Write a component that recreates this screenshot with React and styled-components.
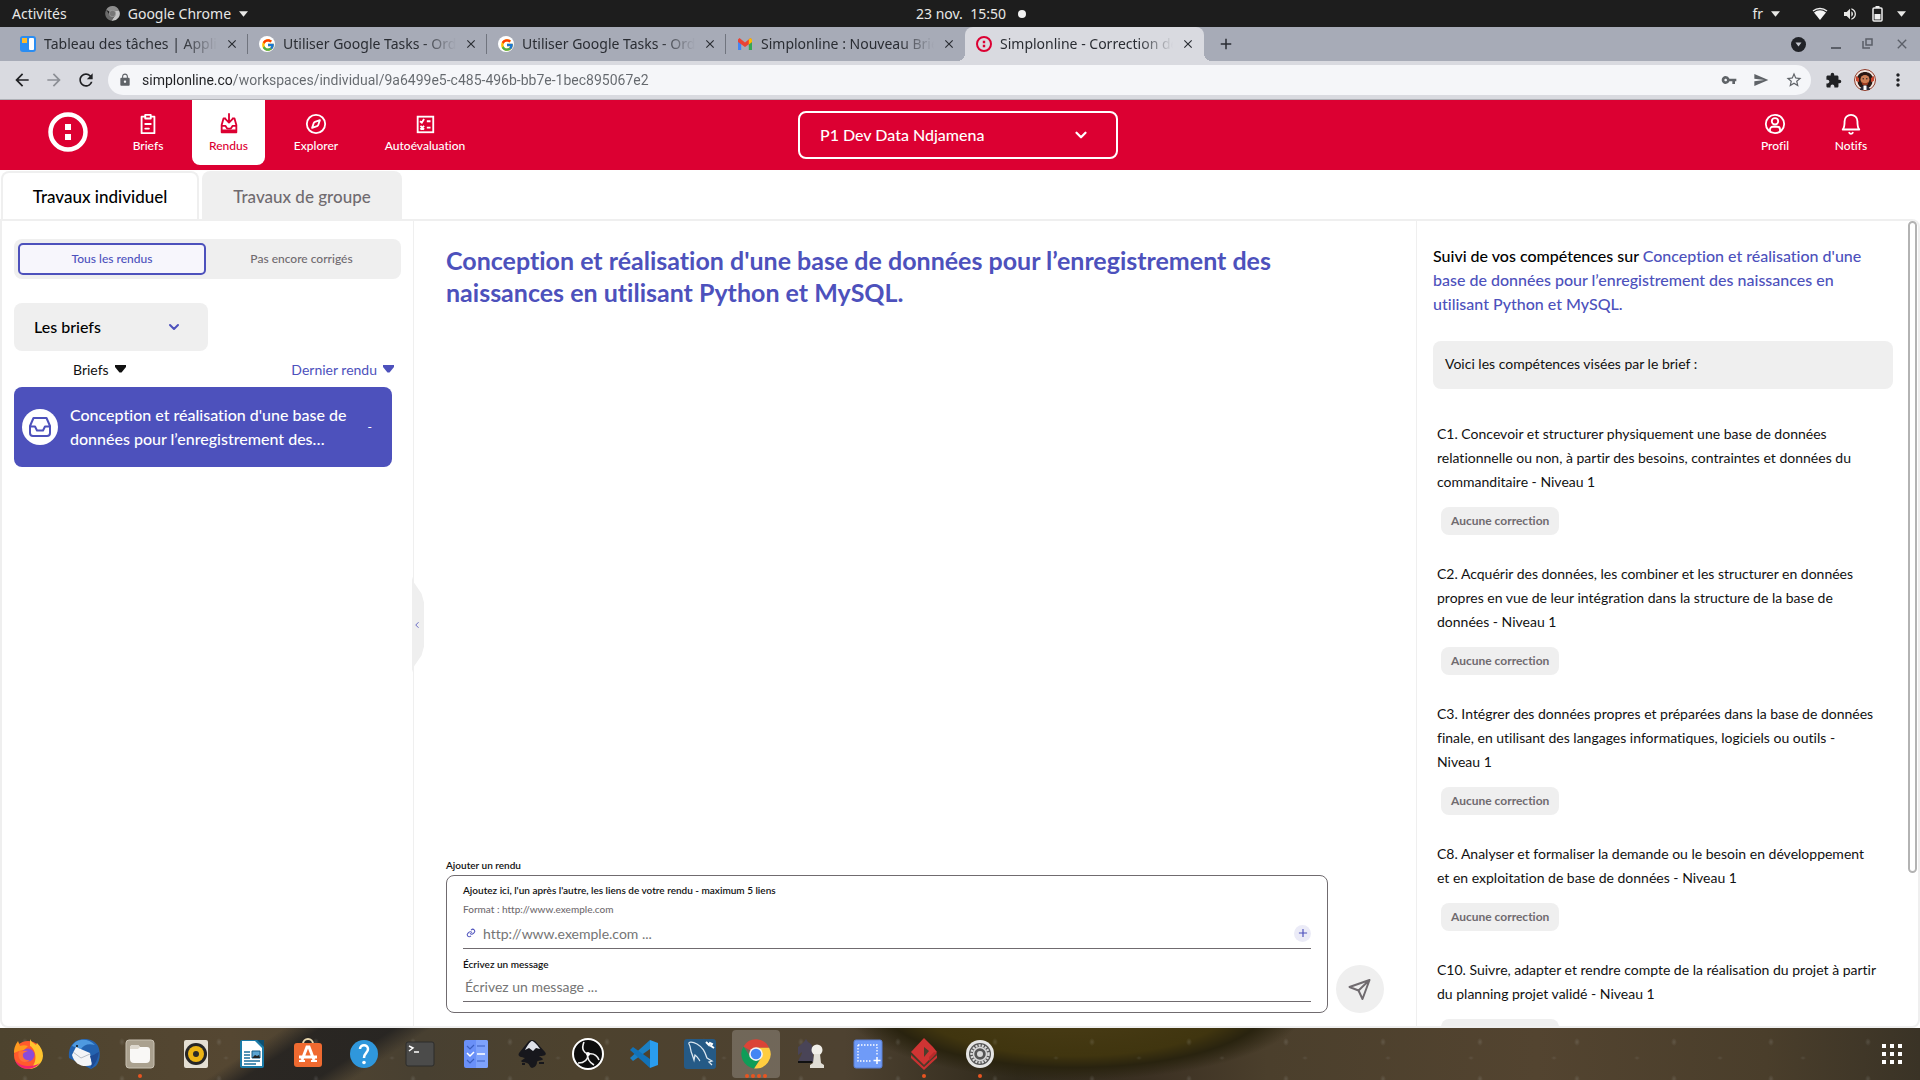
import React from 'react';
import styled, { createGlobalStyle, css } from 'styled-components';
import {
  MdArrowBack, MdArrowForward, MdRefresh, MdLock, MdVpnKey, MdSend, MdStarBorder,
  MdExtension, MdMoreVert, MdVolumeUp, MdAdd, MdClose,
} from 'react-icons/md';
import { FcGoogle } from 'react-icons/fc';
import { Compass, ChevronDown, ChevronLeft } from 'lucide-react';
import { BiLink } from 'react-icons/bi';

const red = '#dc0032';
const violet = '#4d51bc';
const mist = '#efefef';
const smoke = '#706b6f';

const GlobalStyle = createGlobalStyle`
  *, *::before, *::after { box-sizing: border-box; }
  html, body, #root { height: 100%; }
  body { margin: 0; overflow: hidden; background: #fff; font-variant-ligatures: none; }
  body, button, input, select { font-family: Lato, "Open Sans", sans-serif; }
  button, input, select { margin: 0; padding: 0; border: 0; background: none; font-size: inherit; color: inherit; font-variant-ligatures: none; }
  button { display: flex; align-items: center; justify-content: center; cursor: pointer; }
  svg { display: block; flex: none; }
  h1, h2, p, ul { margin: 0; padding: 0; list-style: none; }
`;

const Desktop = styled.div`
  display: flex;
  flex-direction: column;
  height: 100vh;
`;

/* ---------- system bar ---------- */
const SystemBar = styled.div`
  display: grid;
  grid-template-columns: 1fr auto 1fr;
  align-items: center;
  height: 27px;
  padding: 0 14px 0 12px;
  background: #1d1d1d;
  color: #e8e8e6;
  font-family: "Noto Sans", sans-serif;
  font-size: 14px;
  button { font-family: inherit; }
`;
const SystemGroup = styled.div`
  display: flex;
  align-items: center;
  gap: ${(p) => p.$gap}px;
  padding-left: ${(p) => p.$inset || 0}px;
  justify-content: ${(p) => (p.$end ? 'flex-end' : 'flex-start')};
`;
const SystemButton = styled.button`
  gap: 8px;
  margin-right: ${(p) => p.$after || 0}px;
`;
const Dot = styled.span`
  width: 8px;
  height: 8px;
  border-radius: 50%;
  background: #f2f2f2;
`;

/* ---------- browser chrome ---------- */
const TabStrip = styled.div`
  display: flex;
  align-items: center;
  height: 34px;
  padding-left: 9px;
  background: #a7abb7;
  font-family: "Noto Sans", sans-serif;
  font-size: 14px;
  line-height: 18px;
  color: #2a2d33;
`;
const BrowserTab = styled.div`
  position: relative;
  display: flex;
  align-items: center;
  gap: 8px;
  width: 239px;
  height: 34px;
  padding: 0 9px 0 11px;
  border-radius: 8px 8px 0 0;
  background: ${(p) => (p.$active ? '#d9dae0' : 'transparent')};
  ${(p) => p.$divider && css`
    &::after {
      content: '';
      position: absolute;
      right: 0;
      top: 7px;
      height: 20px;
      border-right: 1px solid #70747e;
    }
  `}
  ${(p) => p.$active && css`
    &::before, &::after {
      content: '';
      position: absolute;
      bottom: 0;
      width: 8px;
      height: 8px;
    }
    &::before { left: -8px; background: radial-gradient(circle at 0 0, transparent 8px, #d9dae0 8px); }
    &::after { right: -8px; background: radial-gradient(circle at 100% 0, transparent 8px, #d9dae0 8px); }
  `}
`;
const TabTitle = styled.span`
  flex: 1;
  min-width: 0;
  overflow: hidden;
  white-space: nowrap;
  mask-image: linear-gradient(to right, #000 80%, transparent);
`;
const NewTab = styled.button`
  width: 28px;
  margin-left: 8px;
`;
const WindowControls = styled.div`
  display: flex;
  align-items: center;
  gap: 20px;
  margin-left: auto;
  padding-right: 10px;
  color: #5b5f68;
`;
const TabSearch = styled.button`
  margin-right: 4px;
`;
const Toolbar = styled.div`
  display: flex;
  align-items: center;
  gap: 12px;
  height: 39px;
  padding: 0 12px;
  background: #d9dae0;
  border-bottom: 1px solid #aeb0b6;
  color: #202124;
`;
const AddressBar = styled.label`
  display: flex;
  flex: 1;
  align-items: center;
  gap: 10px;
  height: 30px;
  margin-right: 2px;
  padding: 0 8px 0 10px;
  border-radius: 15px;
  background: #f5f6f9;
  color: #5f6368;
`;
const Address = styled.input`
  flex: 1;
  min-width: 0;
  font-family: Roboto, sans-serif;
  font-size: 14px;
  color: transparent;
  background: linear-gradient(to right, #202124 91px, #64686d 91px);
  background-clip: text;
  outline: 0;
`;
const AddressActions = styled.span`
  display: flex;
  align-items: center;
  gap: 16px;
`;

/* ---------- application header ---------- */
const Header = styled.header`
  display: grid;
  grid-template-columns: 1fr 320px 1fr;
  height: 70px;
  padding: 0 44px 0 40px;
  background: ${red};
  color: #fff;
`;
const Nav = styled.nav`
  display: flex;
  justify-content: ${(p) => (p.$end ? 'flex-end' : 'flex-start')};
`;
const Logo = styled.a`
  display: flex;
  align-items: center;
  height: 64px;
  margin: 0 28px 0 8px;
`;
const NavLink = styled.a`
  display: flex;
  flex-direction: column;
  align-items: center;
  gap: 3px;
  height: 65px;
  min-width: ${(p) => p.$width}px;
  margin-left: ${(p) => p.$space || 0}px;
  padding: 13px 8px 0;
  border-radius: 0 0 8px 8px;
  font-size: 12px;
  line-height: 16px;
  font-weight: 500;
  text-decoration: none;
  color: ${(p) => (p.$active ? red : '#fff')};
  background: ${(p) => (p.$active ? '#fff' : 'transparent')};
`;
const SelectBox = styled.label`
  display: grid;
  align-items: center;
  align-self: start;
  width: ${(p) => p.$width};
  height: 48px;
  margin-top: ${(p) => p.$top}px;
  border-radius: 8px;
  border: ${(p) => (p.$outlined ? '2px solid #fff' : '0')};
  background: ${(p) => (p.$outlined ? 'transparent' : mist)};
  font-size: 16px;
  > * { grid-area: 1 / 1; }
  > svg { justify-self: end; margin-right: 26px; pointer-events: none; color: ${(p) => (p.$outlined ? '#fff' : violet)}; }
`;
const Select = styled.select`
  appearance: none;
  width: 100%;
  height: 100%;
  padding: 0 20px 2px;
  font-weight: 500;
  outline: 0;
`;

/* ---------- workspace ---------- */
const WorkTabs = styled.div`
  display: flex;
  gap: 3px;
  height: 49px;
  padding: 1px 1px 0;
`;
const WorkTab = styled.button`
  width: ${(p) => (p.$active ? 198 : 200)}px;
  border: 2px solid ${mist};
  border-bottom: 0;
  border-radius: 8px 8px 0 0;
  background: ${(p) => (p.$active ? '#fff' : mist)};
  color: ${(p) => (p.$active ? '#000' : smoke)};
  font-size: 17px;
  font-weight: 500;
`;
const Workspace = styled.main`
  display: flex;
  flex: 1;
  min-height: 0;
  border: 2px solid ${mist};
  border-radius: 0 8px 8px 8px;
`;
const Sidebar = styled.aside`
  position: relative;
  flex: none;
  width: 412px;
  padding: 18px 12px 0;
  border-right: 1px solid ${mist};
`;
const Segmented = styled.div`
  display: grid;
  grid-template-columns: 188px 1fr;
  height: 40px;
  padding: 4px;
  border-radius: 8px;
  background: ${mist};
`;
const Segment = styled.button`
  padding-bottom: 1px;
  border: 2px solid ${(p) => (p.$active ? violet : 'transparent')};
  border-radius: 5px;
  background: ${(p) => (p.$active ? '#f7f6fc' : 'transparent')};
  color: ${(p) => (p.$active ? violet : smoke)};
  font-size: 12px;
  font-weight: 500;
`;
const SortRow = styled.div`
  display: flex;
  justify-content: space-between;
  height: 36px;
  padding: 0 7px 0 59px;
  font-size: 14px;
`;
const SortButton = styled.button`
  gap: 6px;
  color: ${(p) => (p.$accent ? violet : '#111')};
`;
const BriefCard = styled.a`
  display: flex;
  align-items: center;
  gap: 12px;
  height: 80px;
  margin-right: 9px;
  padding: 0 20px 0 8px;
  border-radius: 8px;
  background: ${violet};
  color: #fff;
  font-size: 16px;
  line-height: 24px;
  font-weight: 500;
  text-decoration: none;
`;
const BriefIcon = styled.span`
  display: grid;
  place-items: center;
  flex: none;
  width: 36px;
  height: 36px;
  border-radius: 50%;
  background: #fff;
  color: ${violet};
`;
const BriefTitle = styled.span`
  flex: 1;
  display: -webkit-box;
  -webkit-box-orient: vertical;
  -webkit-line-clamp: 2;
  overflow: hidden;
`;
const BriefMark = styled.span`
  font-size: 12px;
`;
const CollapseHandle = styled.button`
  position: absolute;
  right: -11px;
  top: calc(50% - 47px);
  width: 12px;
  height: 96px;
  padding-right: 2px;
  background: ${mist};
  clip-path: polygon(0 0, 15% 6%, 80% 18%, 100% 27%, 100% 73%, 80% 82%, 15% 94%, 0 100%);
  color: ${violet};
`;
const Content = styled.section`
  display: flex;
  flex: 1;
  flex-direction: column;
  justify-content: space-between;
  min-width: 0;
  padding: 23px 32px 13px 32px;
`;
const Title = styled.h1`
  max-width: 880px;
  color: ${violet};
  font-size: 25px;
  line-height: 32px;
  font-weight: 700;
`;
const SubmitRow = styled.form`
  display: flex;
  align-items: flex-end;
  gap: 8px;
`;
const SubmitColumn = styled.div`
  flex: 1;
  font-size: 10px;
  line-height: 16px;
  font-weight: 600;
  color: #111;
`;
const SubmitBox = styled.div`
  display: flex;
  flex-direction: column;
  margin-top: 2px;
  padding: 6px 16px 10px;
  border: 1px solid ${smoke};
  border-radius: 8px;
`;
const Hint = styled.p`
  margin: 3px 0 1px;
  font-weight: 500;
  color: ${smoke};
`;
const Field = styled.div`
  display: flex;
  align-items: center;
  gap: 6px;
  height: ${(p) => p.$height}px;
  padding-left: 2px;
  margin-bottom: ${(p) => p.$space || 0}px;
  border-bottom: 1px solid ${smoke};
  color: ${violet};
`;
const TextInput = styled.input`
  flex: 1;
  font-size: 14px;
  color: #111;
  outline: 0;
  &::placeholder { color: #757575; opacity: 1; }
`;
const AddButton = styled.button`
  width: 17px;
  height: 17px;
  border-radius: 50%;
  background: #ebebf7;
  color: ${violet};
`;
const SendButton = styled.button`
  width: 48px;
  height: 48px;
  border-radius: 50%;
  background: ${mist};
  color: ${smoke};
`;
const SkillsPanel = styled.aside`
  flex: none;
  width: 502px;
  display: flex;
  border-left: 1px solid ${mist};
`;
const SkillsBody = styled.div`
  flex: 1;
  min-height: 0;
  overflow: hidden;
  padding: 23px 15px 0 16px;
`;
const SkillsTitle = styled.h2`
  font-size: 16px;
  line-height: 24px;
  font-weight: 500;
  color: #000;
  span { color: ${violet}; }
`;
const Notice = styled.p`
  margin: 25px 0 33px;
  padding: 11px 12px 13px;
  border-radius: 8px;
  background: ${mist};
  font-size: 14px;
  line-height: 24px;
  color: #111;
`;
const Skill = styled.li`
  display: flex;
  flex-direction: column;
  align-items: flex-start;
  gap: 13px;
  padding: 0 8px 0 4px;
  margin-bottom: 27px;
  font-size: 14px;
  line-height: 24px;
  color: #111;
`;
const Badge = styled.span`
  height: 28px;
  margin-left: 4px;
  padding: 0 10px;
  border-radius: 8px;
  background: ${mist};
  color: ${smoke};
  font-size: 12px;
  line-height: 28px;
  font-weight: 700;
`;
const ScrollTrack = styled.div`
  width: 10px;
  height: 100%;
`;
const ScrollThumb = styled.div`
  width: 9px;
  height: 81%;
  border: 2px solid #b3b3b3;
  border-radius: 5px;
`;

/* ---------- dock ---------- */
const Dock = styled.div`
  display: flex;
  align-items: center;
  justify-content: space-between;
  height: 52px;
  padding: 0 16px 0 4px;
  background:
    radial-gradient(ellipse 3px 4px at 30px 14px, rgba(200, 205, 205, 0.16), transparent) 480px 0 / 97px 37px,
    radial-gradient(ellipse 3px 2px at 60px 30px, rgba(190, 195, 200, 0.12), transparent) 0 0 / 83px 43px,
    radial-gradient(ellipse 200px 64px at 1075px -22px, #4a3d17 0, #40350f 78%, #29230f 96%, transparent 116%),
    linear-gradient(147deg, transparent 0 155px, rgba(32, 31, 31, 0.8) 175px 215px, transparent 235px),
    linear-gradient(to right, #4d432e 0, #554732 12%, #484031 22%, #4d422e 30%, #4e4231 44%, #2f291b 53%, #3c3123 60%, #4b3f2c 66%, #534430 80%, #4a3e2b 92%, #3a3326 100%);
`;
const DockItems = styled.div`
  display: flex;
  gap: 8px;
`;
const DockButton = styled.button`
  position: relative;
  width: 48px;
  height: 48px;
  border-radius: 4px;
  background: ${(p) => (p.$active ? 'rgba(255, 255, 255, 0.2)' : 'transparent')};
`;
const Running = styled.span`
  position: absolute;
  bottom: 0;
  left: 0;
  right: 0;
  display: flex;
  justify-content: center;
  gap: 2px;
  i { width: 4px; height: 4px; border-radius: 50%; background: #e95420; }
`;

/* ---------- drawings ---------- */
const Caret = ({ w = 10, h = 6 }) => (
  <svg width={w} height={h} viewBox="0 0 10 6" fill="currentColor" aria-hidden="true"><path d="M0 0h10L5 6z" /></svg>
);
const SortCaret = () => (
  <svg width="11" height="8" viewBox="0 0 11 8" fill="currentColor" aria-hidden="true"><path d="M0 0h11v2L6.500 7.500h-2L0 2z" /></svg>
);
const ChromeMark = ({ size, gray }) => {
  const c = gray ? ['#8d8d8d', '#6a6a6a', '#c4c4c4', '#777'] : ['#db4437', '#0f9d58', '#ffcd40', '#4285f4'];
  return (
    <svg width={size} height={size} viewBox="0 0 48 48" aria-hidden="true">
      <path fill={c[0]} d="M24 24 4 12A23 23 0 0 1 45 14H24z" />
      <path fill={c[1]} d="M4 12a23 23 0 0 0 17 35l11-18-8-5-9 5z" />
      <path fill={c[2]} d="M45 14a23 23 0 0 1-24 33l12-18-9-15z" />
      <circle cx="24" cy="24" r="11" fill={gray ? '#999' : '#f5f5f5'} />
      <circle cx="24" cy="24" r="8.500" fill={c[3]} />
    </svg>
  );
};
const SimplonMark = ({ size, color, bold }) => (
  <svg width={size} height={size} viewBox="0 0 40 40" fill="none" aria-hidden="true">
    <circle cx="20" cy="20" r="17.500" stroke={color} strokeWidth={bold ? 5 : 4.500} />
    <path fill={color} d="M17 12h6v6h-6zM17 22h6v6h-6z" />
  </svg>
);
const BoardMark = () => (
  <svg width="16" height="16" viewBox="0 0 16 16" aria-hidden="true">
    <rect width="16" height="16" rx="3" fill="#2a8df2" />
    <path fill="#fdbb2d" d="M2 2h5v5H2z" /><rect x="9" y="2" width="5" height="12" rx="1" fill="#fff" />
  </svg>
);
const GmailMark = () => (
  <svg width="16" height="16" viewBox="0 0 16 16" aria-hidden="true">
    <path fill="#4285f4" d="M1 4h3.200v10H1z" /><path fill="#34a853" d="M11.800 6H15v8h-3.200z" />
    <path fill="#ea4335" d="M1 3.500 2.500 2 8 6.500 13.500 2 15 3.500V6l-7 5-7-5z" /><path fill="#fbbc04" d="M11.800 3.500 13.500 2 15 3.500V6l-3.200 2.500z" />
  </svg>
);
const GoogleMark = () => (
  <svg width="16" height="16" viewBox="0 0 16 16" aria-hidden="true">
    <circle cx="8" cy="8" r="8" fill="#fff" /><FcGoogle x="2" y="2" width="12" height="12" />
  </svg>
);
const line = { fill: 'none', stroke: 'currentColor', strokeWidth: 2, strokeLinecap: 'round', strokeLinejoin: 'round', 'aria-hidden': true };
const ClipboardIcon = () => (
  <svg width="22" height="22" viewBox="0 0 24 24" {...line}>
    <path d="M8 4H5v18h14V4h-3M9 2h6v4H9zM9 12h6M9 17h4" />
  </svg>
);
const HandInIcon = () => (
  <svg width="22" height="22" viewBox="0 0 24 24" {...line}>
    <path d="M8 6H6l-2 7v8h16v-8l-2-7h-2M12 1v9M8.500 7l3.500 3.500L15.500 7M4 14h4l2 3h4l2-3h4" /><path d="M5 19.500h14" strokeWidth="3" />
  </svg>
);
const QuizIcon = () => (
  <svg width="22" height="22" viewBox="0 0 24 24" {...line} strokeLinecap="butt" strokeLinejoin="miter">
    <rect x="4" y="4" width="17" height="17" /><path d="m6.500 9 2 1.500 2.500-4M7 14l4 4M11 14l-4 4M14 9h4M14 16h4" />
  </svg>
);
const ProfileIcon = () => (
  <svg width="22" height="22" viewBox="0 0 24 24" {...line}>
    <circle cx="12" cy="12" r="10" /><circle cx="12" cy="9" r="3.500" /><path d="M6.500 20v-2a3 3 0 0 1 3-3h5a3 3 0 0 1 3 3v2" />
  </svg>
);
const BellIcon = () => (
  <svg width="22" height="22" viewBox="0 0 24 24" {...line}>
    <path d="M3 18h18c-2-2-2-4-2-9a7 7 0 0 0-14 0c0 5 0 7-2 9zM10 21.500a2.200 2.200 0 0 0 4 0" />
  </svg>
);
const InboxIcon = () => (
  <svg width="24" height="24" viewBox="0 0 24 24" {...line}>
    <path d="M5.500 3h13L22 11v7a3 3 0 0 1-3 3H5a3 3 0 0 1-3-3v-7zM2 11.500h5l2 4h6l2-4h5" />
  </svg>
);
const PlaneIcon = () => (
  <svg width="24" height="24" viewBox="0 0 24 24" {...line}>
    <path d="M21.500 3 1.500 10l9 3.500L14.500 22z M21.500 3l-11 10.500" />
  </svg>
);
const WifiIcon = () => (
  <svg width="16" height="14" viewBox="0 0 16 14" aria-hidden="true">
    <path d="M1 4a11 11 0 0 1 14 0" fill="none" stroke="#eee" strokeWidth="1.500" /><path d="M2 5.500a9.500 9.500 0 0 1 12 0L8 13z" fill="#f4f4f4" />
  </svg>
);
const BatteryIcon = () => (
  <svg width="11" height="16" viewBox="0 0 11 16" aria-hidden="true">
    <path d="M3.500 0h4v2h-4z" fill="#eee" /><rect x="1" y="2" width="9" height="13" rx="1" fill="none" stroke="#eee" strokeWidth="1.500" /><path d="M2.500 8h6v5.500h-6z" fill="#eee" />
  </svg>
);
const AvatarIcon = () => (
  <svg width="22" height="22" viewBox="0 0 22 22" aria-hidden="true">
    <circle cx="11" cy="11" r="11" fill="#f3e6df" /><circle cx="11" cy="11" r="10.500" fill="none" stroke="#8a3a2c" />
    <path d="M3 9c2-8 14-8 16 0l-1 6-2 3H6l-2-3z" fill="#2a1712" /><path d="M2 7l3 2v4L2 12zM20 7l-3 2v4l3-1z" fill="#c8452c" />
    <circle cx="11" cy="10.500" r="4.500" fill="#cf7f55" /><path d="M7.500 12c1 3 6 3 7 0l-1 4h-5z" fill="#9b3a20" />
    <path d="M6 21c0-6 10-6 10 0z" fill="#2b2d3b" /><path d="M9.500 16.500h3V21h-3z" fill="#fff" />
    <circle cx="9.200" cy="9.800" r=".7" fill="#222" /><circle cx="12.800" cy="9.800" r=".7" fill="#222" />
  </svg>
);

const DockArt = ({ children }) => <svg width="32" height="32" viewBox="0 0 32 32" aria-hidden="true">{children}</svg>;

const dockApps = [
  { name: 'Firefox', art: <>
    <circle cx="16" cy="17" r="14" fill="#ff5a2d" />
    <path d="M18 1c1 3 4 4 6 6l1-2c4 4 6 8 6 13a14 14 0 0 1-14 13C26 27 25 12 18 8z" fill="#ffc42e" />
    <path d="M2 15C2 9 4 6 6 3l2 5c3-1 5-1 8 0l-4 4-5 1z" fill="#ff9a1f" />
    <circle cx="16" cy="17" r="6.500" fill="#8b4bd8" /><path d="M7 13c3 1 5-1 9 0-2 1-4 1-5 3-1 4 3 7 7 6-6 5-14 0-11-9z" fill="#ff7139" />
    <path d="M3 22c3 10 18 12 25 3-6 4-19 5-25-3z" fill="#f2246e" /></> },
  { name: 'Thunderbird', art: <>
    <path d="M1 20C0 10 4 6 8 3c8-4 18-2 22 5 3 7 2 15-2 20l-5 3z" fill="#2463b0" /><path d="M4 8C9 0 20 0 27 7c-7-2-11 0-14 4z" fill="#4f9ae0" />
    <path d="M4 17 8 9l14 6 2 12c-9 3-17 0-20-10z" fill="#f4f5f7" /><path d="m5 14 8 6 9-4" fill="none" stroke="#b7bcc4" />
    <circle cx="9" cy="8" r="1" fill="#111" />
    <path d="M22 18c3 0 6-3 9-4-1 7-4 13-9 17l2-6z" fill="#1e4b95" /></> },
  { name: 'Fichiers', running: 1, art: <>
    <rect x="2" y="2" width="28" height="28" rx="3" fill="#aaa18f" stroke="#c8c1b2" />
    <path d="M6 10a3 3 0 0 1 3-3h5l2 2h7a3 3 0 0 1 3 3v9a4 4 0 0 1-4 4H10a4 4 0 0 1-4-4z" fill="#f9f8f6" /><path d="M6 10a3 3 0 0 1 3-3h5l2 2-2 2H6z" fill="#ddd8ce" /></> },
  { name: 'Rhythmbox', art: <>
    <rect x="4" y="2" width="24" height="28" rx="2" fill="#e4dfd3" /><circle cx="16" cy="16" r="11" fill="#262626" />
    <circle cx="16" cy="16" r="8" fill="#ecb414" /><circle cx="16" cy="16" r="3" fill="#2a2a2a" /></> },
  { name: 'LibreOffice Writer', art: <>
    <rect x="4" y="2" width="24" height="28" rx="2" fill="#1b7ba8" /><path d="M6 3h13l7 7v18H6z" fill="#fff" /><path d="M21 2h7v7z" fill="#0e4f70" />
    <path d="M8 14h6M8 17h6M8 20h6M8 23h16M8 26h12" stroke="#1b6f9c" strokeWidth="1.500" /><path d="M16 13h8v7h-8z" fill="#5aa3d0" stroke="#175d85" /><path d="m16 20 3-3 2 1 2-1 1 3z" fill="#222" /></> },
  { name: 'Ubuntu Software', art: <>
    <path d="M11 6a5 5 0 0 1 10 0" fill="none" stroke="#ead7ad" strokeWidth="2" /><rect x="2" y="5" width="28" height="24" rx="3" fill="#ef6a30" />
    <path d="m10 22 5-13h2l5 13M7 19h18" fill="none" stroke="#fff" strokeWidth="3" /><path d="M7 22h6v2H7zM19 22h6v2h-6z" fill="#fff" /></> },
  { name: 'Aide', art: <>
    <circle cx="16" cy="16" r="14" fill="#2f97dc" /><path d="M12 11c0-5 8-5 8 0 0 4-4 4-4 9" fill="none" stroke="#fff" strokeWidth="2.500" /><circle cx="16" cy="24.500" r="1.800" fill="#fff" /></> },
  { name: 'Terminal', art: <>
    <rect x="2" y="4" width="28" height="24" rx="2" fill="#4b4b4a" stroke="#2c2c2b" /><path d="m5 8 4 2-4 3" fill="none" stroke="#fff" strokeWidth="1.500" /><path d="M10 14h5" stroke="#fff" strokeWidth="1.500" /></> },
  { name: 'Tâches', art: <>
    <rect x="4" y="2" width="24" height="28" rx="2" fill="#6a90f8" /><path d="M16 2h10a2 2 0 0 1 2 2v24a2 2 0 0 1-2 2H16z" fill="#7ea2fb" />
    <path d="m7 8 3 3 4-4M7 22l3 3 4-4M17 8h8M17 23h8" fill="none" stroke="#3b5fc0" strokeWidth="1.200" /><path d="m7 15 3 3 4-4M17 16h8" fill="none" stroke="#fff" strokeWidth="1.500" /></> },
  { name: 'Inkscape', art: <>
    <path d="M16 2c2 0 3 1 4 2l9 10c3 4-3 4-6 4l4 3c0 2-6 1-6 3s-1 5-5 6c-3-1-2-4-5-5-2-1-5 0-6-2l4-3c-3-1-8-1-6-5l9-11c1-1 2-2 4-2z" fill="#17171c" />
    <path d="M16 3c2 0 7 6 8 8l-4-1-3 3-4-3-4 2c1-2 5-9 7-9z" fill="#dfe2ea" /><path d="M23 25h5M6 26h3" stroke="#17171c" strokeWidth="2" /></> },
  { name: 'OBS Studio', art: <>
    <circle cx="16" cy="16" r="15" fill="#0c0c0c" stroke="#fff" strokeWidth="2" />
    <path d="M12 4c-3 7 0 11 4 12 5-1 9 1 11 6M16 16c0 6-4 9-10 9M16 16c-1 4 1 8 6 11" fill="none" stroke="#f1f1f1" strokeWidth="1.600" /><circle cx="16" cy="16" r="2" fill="#fff" /></> },
  { name: 'Visual Studio Code', art: <>
    <path d="M22 2 30 5v22l-8 3z" fill="#2a9df0" /><path d="M22 2v9L5 23l-3-3z" fill="#1b80c4" /><path d="M22 30v-9L5 9l-3 3z" fill="#1272b8" /></> },
  { name: 'MySQL Workbench', art: <>
    <rect x="0" y="1" width="32" height="30" rx="3" fill="#255a86" /><path d="M5 6c-1-3 4-2 8 0 7 4 8 9 10 14l5 3-3 1 3 3M5 6c2 3 1 6 3 10l2 6 1-5c3 2 4 5 5 6" fill="none" stroke="#dbe7f0" strokeWidth="1.300" />
    <path d="m22 4 3 3 1-2 2 1-1 2 3 2" fill="none" stroke="#fff" strokeWidth="2" /></> },
  { name: 'Google Chrome', running: 4, active: true, chrome: true },
  { name: 'Échecs', art: <>
    <path d="M2 24c1-4 4-7 4-10l-4 3V9l6-5 2-3 2 3c5 2 6 8 5 14l1 4v2z" fill="#494457" /><path d="M2 23h14v2H2z" fill="#111" />
    <circle cx="21" cy="12" r="5.500" fill="#f1efe9" /><path d="M18 16h6l1 9 3 2v3H14v-3l3-2z" fill="#e0ddd5" /></> },
  { name: "Capture d'écran", art: <>
    <rect x="2" y="2" width="28" height="28" rx="2" fill="#6f9bf8" stroke="#5b7fd4" /><path d="M6 7h19v11M6 7v16h14" fill="none" stroke="#fff" strokeWidth="1.300" strokeDasharray="1.500 1.500" /><path d="M25 19v7M21.500 22.500h7" stroke="#fff" strokeWidth="1.500" /></> },
  { name: 'Visual Paradigm', running: 1, art: <>
    <path d="m16 0 9 9 4 5-13 13L3 14z" fill="#cf3433" /><path d="m16 9 5 4-5 6z" fill="#4b3f2c" /><path d="m21 19 5-5 3 1-8 9z" fill="#b92a2a" />
    <path d="m3 17 13 12 13-12v3L16 32 3 20z" fill="#c93232" /><path d="m3 16 13 12 13-12" fill="none" stroke="#4b3f2c" /></> },
  { name: 'Paramètres', running: 1, art: <>
    <circle cx="16" cy="16" r="14" fill="#e6e6e5" /><circle cx="16" cy="16" r="11" fill="#555" /><circle cx="16" cy="16" r="8.500" fill="none" stroke="#d9d9d9" strokeWidth="2.500" strokeDasharray="2 1.200" />
    <circle cx="16" cy="16" r="6.500" fill="none" stroke="#d9d9d9" strokeWidth="1.500" /><circle cx="16" cy="16" r="3" fill="#d9d9d9" /></> },
];

const briefName = "Conception et réalisation d'une base de données pour l’enregistrement des naissances en utilisant Python et MySQL.";
const browserTabs = [
  { title: 'Tableau des tâches | Application', icon: <BoardMark /> },
  { title: 'Utiliser Google Tasks - Ordinateur', icon: <GoogleMark /> },
  { title: 'Utiliser Google Tasks - Ordinateur', icon: <GoogleMark /> },
  { title: 'Simplonline : Nouveau Brief', icon: <GmailMark /> },
  { title: 'Simplonline - Correction des', icon: <SimplonMark size={16} color={red} bold />, active: true },
];
const skills = [
  'C1. Concevoir et structurer physiquement une base de données relationnelle ou non, à partir des besoins, contraintes et données du commanditaire - Niveau\u00a01',
  'C2. Acquérir des données, les combiner et les structurer en données propres en vue de leur intégration dans la structure de la base de données\u00a0- Niveau\u00a01',
  'C3. Intégrer des données propres et préparées dans la base de données finale, en utilisant des langages informatiques, logiciels ou outils - Niveau\u00a01',
  'C8. Analyser et formaliser la demande ou le besoin en développement et\u00a0en exploitation de base de données - Niveau\u00a01',
  'C10. Suivre, adapter et rendre compte de la réalisation du projet à partir du planning projet validé - Niveau\u00a01',
];

export default function App() {
  return (
    <Desktop>
      <GlobalStyle />
      <SystemBar>
        <SystemGroup $gap={38}>
          <SystemButton>Activités</SystemButton>
          <SystemButton><ChromeMark size={15} gray />Google Chrome<Caret w={9} /></SystemButton>
        </SystemGroup>
        <SystemGroup $gap={12} $inset={24}><span>23 nov.&nbsp; 15:50</span><Dot /></SystemGroup>
        <SystemGroup $gap={14} $end>
          <SystemButton $after={18}>fr<Caret w={9} /></SystemButton>
          <WifiIcon /><MdVolumeUp size={16} /><BatteryIcon /><Caret w={9} />
        </SystemGroup>
      </SystemBar>

      <TabStrip>
        {browserTabs.map((tab, i) => (
          <BrowserTab key={i} $active={tab.active} $divider={i < 3}>
            {tab.icon}
            <TabTitle>{tab.title}</TabTitle>
            <button aria-label="Fermer l'onglet"><MdClose size={14} /></button>
          </BrowserTab>
        ))}
        <NewTab aria-label="Nouvel onglet"><MdAdd size={18} /></NewTab>
        <WindowControls>
          <TabSearch aria-label="Rechercher un onglet">
            <svg width="15" height="15" viewBox="0 0 15 15" aria-hidden="true"><circle cx="7.500" cy="7.500" r="7.500" fill="#202227" /><path d="M4.500 5.500h6l-3 4z" fill="#c3c6ce" /></svg>
          </TabSearch>
          <svg width="12" height="12" viewBox="0 0 12 12" aria-hidden="true"><path d="M1 9h10v2H1z" fill="currentColor" /></svg>
          <svg width="12" height="12" viewBox="0 0 12 12" fill="none" stroke="currentColor" strokeWidth="1.500" aria-hidden="true"><path d="M4 1h6v6H4zM1 3v7h7" /></svg>
          <MdClose size={16} />
        </WindowControls>
      </TabStrip>

      <Toolbar>
        <button aria-label="Précédent"><MdArrowBack size={20} /></button>
        <button aria-label="Suivant"><MdArrowForward size={20} color="#8c8f95" /></button>
        <button aria-label="Actualiser"><MdRefresh size={20} /></button>
        <AddressBar>
          <MdLock size={14} />
          <Address aria-label="Adresse" defaultValue="simplonline.co/workspaces/individual/9a6499e5-c485-496b-bb7e-1bec895067e2" />
          <AddressActions><MdVpnKey size={16} /><MdSend size={16} /><MdStarBorder size={18} /></AddressActions>
        </AddressBar>
        <MdExtension size={17} />
        <AvatarIcon />
        <MdMoreVert size={20} />
      </Toolbar>

      <Header>
        <Nav>
          <Logo href="#" aria-label="Simplonline"><SimplonMark size={40} color="#fff" /></Logo>
          <NavLink href="#" $width={64}><ClipboardIcon />Briefs</NavLink>
          <NavLink href="#" $width={73} $space={12} $active><HandInIcon />Rendus</NavLink>
          <NavLink href="#" $width={76} $space={13}><Compass size={22} />Explorer</NavLink>
          <NavLink href="#" $width={114} $space={14}><QuizIcon />Autoévaluation</NavLink>
        </Nav>
        <SelectBox $outlined $top={11} $width="100%">
          <Select aria-label="Promotion"><option>P1 Dev Data Ndjamena</option></Select>
          <ChevronDown size={18} strokeWidth={3} />
        </SelectBox>
        <Nav $end>
          <NavLink href="#" $width={50}><ProfileIcon />Profil</NavLink>
          <NavLink href="#" $width={50} $space={26}><BellIcon />Notifs</NavLink>
        </Nav>
      </Header>

      <WorkTabs>
        <WorkTab $active>Travaux individuel</WorkTab>
        <WorkTab>Travaux de groupe</WorkTab>
      </WorkTabs>

      <Workspace>
        <Sidebar>
          <Segmented>
            <Segment $active>Tous les rendus</Segment>
            <Segment>Pas encore corrigés</Segment>
          </Segmented>
          <SelectBox $top={24} $width="194px">
            <Select aria-label="Type de liste"><option>Les briefs</option></Select>
            <ChevronDown size={16} strokeWidth={3} />
          </SelectBox>
          <SortRow>
            <SortButton>Briefs<SortCaret /></SortButton>
            <SortButton $accent>Dernier rendu<SortCaret /></SortButton>
          </SortRow>
          <BriefCard href="#">
            <BriefIcon><InboxIcon /></BriefIcon>
            <BriefTitle>{briefName}</BriefTitle>
            <BriefMark>-</BriefMark>
          </BriefCard>
          <CollapseHandle aria-label="Replier"><ChevronLeft size={10} /></CollapseHandle>
        </Sidebar>

        <Content>
          <Title>{briefName}</Title>
          <SubmitRow>
            <SubmitColumn>
              Ajouter un rendu
              <SubmitBox>
                <label htmlFor="link">Ajoutez ici, l'un après l'autre, les liens de votre rendu - maximum 5 liens</label>
                <Hint>Format : http://www.exemple.com</Hint>
                <Field $height={31} $space={7}>
                  <BiLink size={12} />
                  <TextInput id="link" placeholder="http://www.exemple.com ..." />
                  <AddButton type="button" aria-label="Ajouter un lien"><MdAdd size={14} /></AddButton>
                </Field>
                <label htmlFor="message">Écrivez un message</label>
                <Field $height={30}><TextInput id="message" placeholder="Écrivez un message ..." /></Field>
              </SubmitBox>
            </SubmitColumn>
            <SendButton type="button" aria-label="Envoyer"><PlaneIcon /></SendButton>
          </SubmitRow>
        </Content>

        <SkillsPanel>
          <SkillsBody>
            <SkillsTitle>Suivi de vos compétences sur <span>{briefName}</span></SkillsTitle>
            <Notice>Voici les compétences visées par le brief :</Notice>
            <ul>
              {skills.map((skill) => (
                <Skill key={skill}>{skill}<Badge>Aucune correction</Badge></Skill>
              ))}
            </ul>
          </SkillsBody>
          <ScrollTrack><ScrollThumb /></ScrollTrack>
        </SkillsPanel>
      </Workspace>

      <Dock>
        <DockItems>
          {dockApps.map((app) => (
            <DockButton key={app.name} aria-label={app.name} $active={app.active}>
              {app.chrome ? <ChromeMark size={30} /> : <DockArt>{app.art}</DockArt>}
              {app.running && <Running>{Array.from({ length: app.running }, (_, i) => <i key={i} />)}</Running>}
            </DockButton>
          ))}
        </DockItems>
        <button aria-label="Afficher les applications">
          <svg width="24" height="24" viewBox="0 0 24 24" fill="#fff" aria-hidden="true">
            <path d="M2 2h4v4H2zM10 2h4v4h-4zM18 2h4v4h-4zM2 10h4v4H2zM10 10h4v4h-4zM18 10h4v4h-4zM2 18h4v4H2zM10 18h4v4h-4zM18 18h4v4h-4z" />
          </svg>
        </button>
      </Dock>
    </Desktop>
  );
}
